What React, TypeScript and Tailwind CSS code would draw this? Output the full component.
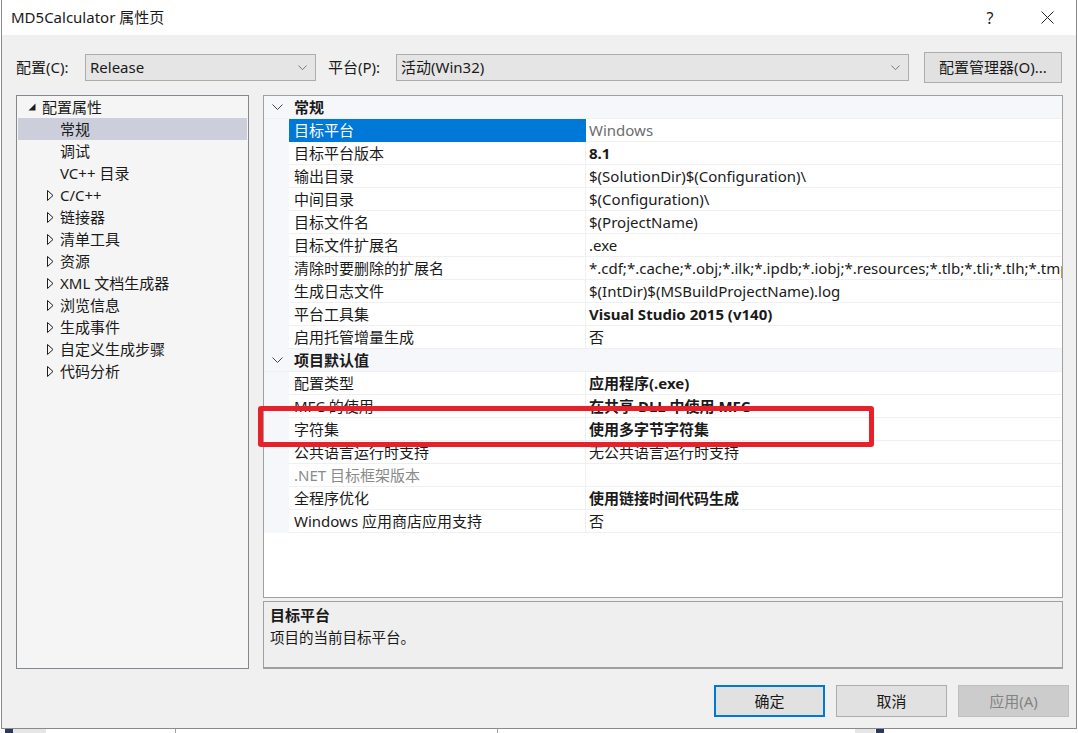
import { useState } from "react";

type Prop = { name: string; value: string; bold?: boolean; dim?: boolean; muted?: boolean };

const general: Prop[] = [
  { name: "目标平台", value: "Windows", muted: true },
  { name: "目标平台版本", value: "8.1", bold: true },
  { name: "输出目录", value: "$(SolutionDir)$(Configuration)\\" },
  { name: "中间目录", value: "$(Configuration)\\" },
  { name: "目标文件名", value: "$(ProjectName)" },
  { name: "目标文件扩展名", value: ".exe" },
  {
    name: "清除时要删除的扩展名",
    value: "*.cdf;*.cache;*.obj;*.ilk;*.ipdb;*.iobj;*.resources;*.tlb;*.tli;*.tlh;*.tmp;*.rsp;*.pgc;*.pgd;*.meta;*.tlog",
  },
  { name: "生成日志文件", value: "$(IntDir)$(MSBuildProjectName).log" },
  { name: "平台工具集", value: "Visual Studio 2015 (v140)", bold: true },
  { name: "启用托管增量生成", value: "否" },
];

const defaults: Prop[] = [
  { name: "配置类型", value: "应用程序(.exe)", bold: true },
  { name: "MFC 的使用", value: "在共享 DLL 中使用 MFC", bold: true },
  { name: "字符集", value: "使用多字节字符集", bold: true },
  { name: "公共语言运行时支持", value: "无公共语言运行时支持" },
  { name: ".NET 目标框架版本", value: "", dim: true },
  { name: "全程序优化", value: "使用链接时间代码生成", bold: true },
  { name: "Windows 应用商店应用支持", value: "否" },
];

const tree: { label: string; depth: number; kind: "open" | "closed" | "leaf" }[] = [
  { label: "配置属性", depth: 0, kind: "open" },
  { label: "常规", depth: 1, kind: "leaf" },
  { label: "调试", depth: 1, kind: "leaf" },
  { label: "VC++ 目录", depth: 1, kind: "leaf" },
  { label: "C/C++", depth: 1, kind: "closed" },
  { label: "链接器", depth: 1, kind: "closed" },
  { label: "清单工具", depth: 1, kind: "closed" },
  { label: "资源", depth: 1, kind: "closed" },
  { label: "XML 文档生成器", depth: 1, kind: "closed" },
  { label: "浏览信息", depth: 1, kind: "closed" },
  { label: "生成事件", depth: 1, kind: "closed" },
  { label: "自定义生成步骤", depth: 1, kind: "closed" },
  { label: "代码分析", depth: 1, kind: "closed" },
];

function ChevronDown({ className }: { className?: string }) {
  return (
    <svg width="11" height="7" viewBox="0 0 11 7" className={className}>
      <polyline points="0.5,0.5 5.5,5.5 10.5,0.5" fill="none" stroke="currentColor" strokeWidth="1" />
    </svg>
  );
}

function Combo({ value, width }: { value: string; width: string }) {
  return (
    <div className={`${width} h-[27px] flex items-center justify-between border border-[#adadad] bg-[#e5e5e5] pl-[4px] pr-[8px]`}>
      <span>{value}</span>
      <ChevronDown className="text-[#606060] w-[9px] h-[6px]" />
    </div>
  );
}

function CategoryRow({ title }: { title: string }) {
  return (
    <div className="h-[23px] flex items-center bg-[#f5f7fa] border-b border-[#f0f0f0]">
      <div className="w-[25px] flex justify-center pl-[1px]">
        <ChevronDown className="text-[#444]" />
      </div>
      <span className="pl-[5px] font-bold">{title}</span>
    </div>
  );
}

function PropRow({ p, selected }: { p: Prop; selected?: boolean }) {
  return (
    <div className="h-[23px] flex bg-[#f5f7fa]">
      <div className="w-[25px] shrink-0" />
      <div
        className={`w-[297px] shrink-0 flex items-center pl-[5px] border-b border-r ${
          selected ? "bg-[#0078d7] text-white border-[#0078d7]" : "bg-white border-[#f0f0f0]"
        } ${p.dim ? "text-[#8a8a8a]" : ""}`}
      >
        {p.name}
      </div>
      <div
        className={`flex-1 min-w-0 flex items-center pl-[3px] bg-white border-b border-[#f0f0f0] whitespace-nowrap overflow-hidden ${
          p.bold ? "font-bold" : ""
        } ${p.muted ? "text-[#6d6d6d]" : ""}`}
      >
        {p.value}
      </div>
    </div>
  );
}

function Expander({ kind }: { kind: "open" | "closed" | "leaf" }) {
  if (kind === "open")
    return (
      <svg width="8" height="8" viewBox="0 0 8 8">
        <polygon points="7.5,0.5 7.5,7.5 0.5,7.5" fill="#1e1e1e" />
      </svg>
    );
  if (kind === "closed")
    return (
      <svg width="7" height="11" viewBox="0 0 7 11">
        <polygon points="0.5,0.5 6,5.5 0.5,10.5" fill="none" stroke="#1e1e1e" strokeWidth="1" />
      </svg>
    );
  return null;
}

export default function App() {
  const [selected] = useState("常规");

  return (
    <div
      className="relative w-[1078px] h-[733px] bg-white overflow-hidden text-[15px] text-[#1a1a1a] leading-none"
      style={{ fontFamily: '"Noto Sans", "Noto Sans CJK SC", sans-serif' }}
    >
      <div className="ml-[1px] w-[1076px] h-[729px] border border-t-0 border-[#8a8a8a] flex flex-col">
        {/* title bar */}
        <div className="h-[35px] bg-white flex items-center pl-[9px]">
          <span className="flex-1">MD5Calculator 属性页</span>
          <span className="w-[20px] text-center text-[16px] mr-[41px]">?</span>
          <svg width="13" height="13" viewBox="0 0 13 13" className="mr-[22px]">
            <path d="M0.5 0.5 L12.5 12.5 M12.5 0.5 L0.5 12.5" stroke="#222" strokeWidth="1" />
          </svg>
        </div>

        <div className="flex-1 bg-[#f0f0f0] flex flex-col pl-[14px] pr-[7px]">
          {/* configuration toolbar */}
          <div className="mt-[17px] flex items-center">
            <span className="w-[69px]">配置(C):</span>
            <Combo value="Release" width="w-[231px]" />
            <span className="ml-[12px] w-[68px]">平台(P):</span>
            <Combo value="活动(Win32)" width="w-[513px]" />
            <div className="ml-[15px] w-[138px] h-[31px] flex items-center justify-center border border-[#adadad] bg-[#e1e1e1]">
              配置管理器(O)...
            </div>
          </div>

          <div className="mt-[12px] flex">
            {/* category tree */}
            <div className="w-[233px] h-[574px] border border-[#828790] bg-[#f5f5f5] px-[1px]">
              {tree.map((t) => (
                <div
                  key={t.label}
                  className={`h-[22px] flex items-center ${t.label === selected ? "bg-[#cccedb]" : ""}`}
                >
                  <div className={`${t.depth === 0 ? "w-[24px] pl-[10px]" : "w-[42px] pl-[29px]"} flex items-center`}>
                    <Expander kind={t.kind} />
                  </div>
                  <span>{t.label}</span>
                </div>
              ))}
            </div>

            <div className="ml-[14px] w-[800px] flex flex-col">
              {/* property grid */}
              <div className="h-[503px] border border-[#a0a0a0] bg-white overflow-hidden">
                <CategoryRow title="常规" />
                {general.map((p, i) => (
                  <PropRow key={p.name} p={p} selected={i === 0} />
                ))}
                <CategoryRow title="项目默认值" />
                {defaults.map((p) => (
                  <PropRow key={p.name} p={p} />
                ))}
              </div>

              {/* description */}
              <div className="mt-[3px] h-[68px] border border-[#a0a0a0] border-b-2 bg-[#efefef] pl-[6px] pt-[6px]">
                <div className="font-bold h-[22px]">目标平台</div>
                <div className="text-[14.5px]">项目的当前目标平台。</div>
              </div>
            </div>
          </div>

          {/* dialog buttons */}
          <div className="mt-[16px] flex justify-end gap-[11px]">
            <div className="w-[111px] h-[32px] flex items-center justify-center border-2 border-[#0078d7] bg-[#e1e1e1]">
              确定
            </div>
            <div className="w-[111px] h-[32px] flex items-center justify-center border border-[#adadad] bg-[#e1e1e1]">
              取消
            </div>
            <div className="w-[111px] h-[32px] flex items-center justify-center border border-[#bfbfbf] bg-[#cccccc] text-[#838383]">
              应用(A)
            </div>
          </div>
        </div>
      </div>

      {/* bits of the desktop below the window */}
      <div className="absolute left-[5px] top-[729px] w-[8px] h-[4px] bg-[#2b3a5c]" />
      <div className="absolute left-[13px] top-[729px] w-[33px] h-[4px] bg-[#e6e6e6]" />
      <div className="absolute left-[175px] top-[729px] w-[1px] h-[4px] bg-[#a0a0a0]" />
      <div className="absolute left-[497px] top-[729px] w-[1px] h-[4px] bg-[#a0a0a0]" />
      <div className="absolute left-[855px] top-[729px] w-[20px] h-[4px] bg-[#e6e6e6]" />
      <div className="absolute left-[876px] top-[729px] w-[8px] h-[4px] bg-[#2b3a5c]" />

      {/* red highlight frame */}
      <div className="absolute left-[258px] top-[406px] w-[616px] h-[41px] border-[5px] border-[#e8202a] rounded-[3px]" />
    </div>
  );
}
